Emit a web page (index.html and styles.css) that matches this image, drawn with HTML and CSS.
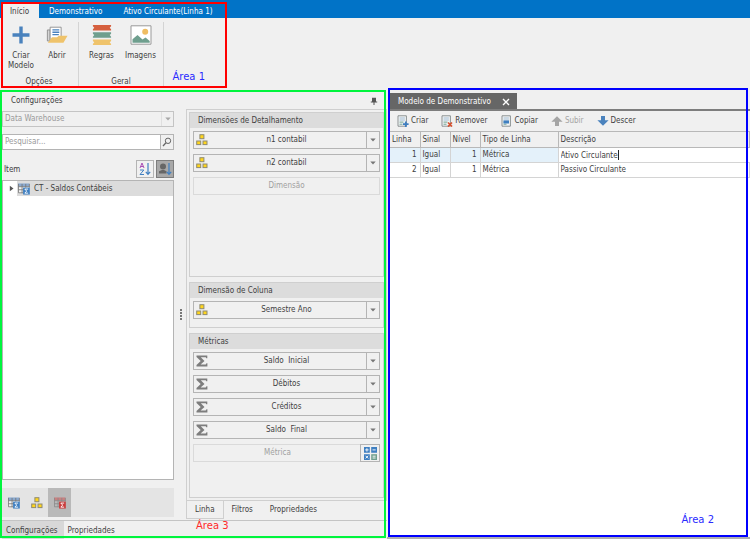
FILE: index.html
```
<!DOCTYPE html>
<html lang="pt-BR">
<head>
  <meta charset="UTF-8" />
  <meta name="viewport" content="width=device-width, initial-scale=1.0"/>
  <title>Modelo de Demonstrativo</title>
  <link rel="stylesheet" href="styles.css">
</head>
<body>
  <!-- shared icons -->
  <svg class="sprite" aria-hidden="true">
    <symbol id="i-cubes" viewBox="0 0 12 12">
      <g fill="#ffd51c" stroke="#8e8a72" stroke-width="1">
        <rect x="3.9" y=".7" width="4" height="4"/>
        <rect x=".7" y="7" width="4" height="3.6"/>
        <rect x="7" y="7" width="4" height="3.6"/>
      </g>
    </symbol>
    <symbol id="i-sigma" viewBox="0 0 12 12">
      <path d="M.5.5h10.8v2.8h-1l-.6-1.1H4.8L8.500 6 4.600 9.600h5.100l.8-1.3h.9v3.200H.5v-1.600L4.700 6 .5 2z" fill="#7d7d7d"/>
    </symbol>
    <symbol id="i-table" viewBox="0 0 13 13">
      <path d="M.5 1h12v10H.5z" fill="#f3f3f3"/>
      <path d="M0 .5h12.5v3.3H0z" fill="#8aa9cf"/>
      <path d="M.5 1v9.6h5M.5 4h12M.5 7.3h6M4.4 1v10M8.4 1v4M12.3 1v4" fill="none" stroke="#777" stroke-width=".9"/>
      <path d="M5.5 5h7.3v7.5H5.5z" fill="#3f7fc1"/>
      <path d="M11 6.6H7.4L9.4 8.8 7.4 11H11" fill="none" stroke="#fff" stroke-width="1"/>
    </symbol>
    <symbol id="i-table-red" viewBox="0 0 13 13">
      <path d="M0 .5h12.5v3.3H0z" fill="#c98080"/>
      <path d="M.5 1v9.6h5M.5 4h12M.5 7.3h6M4.4 1v10M8.4 1v4M12.3 1v4" fill="none" stroke="#888" stroke-width=".9"/>
      <path d="M5.5 5h7.3v7.5H5.5z" fill="#c93c3c"/>
      <path d="M11 6.6H7.4L9.4 8.8 7.4 11H11" fill="none" stroke="#fff" stroke-width="1"/>
    </symbol>
    <symbol id="i-sheet" viewBox="0 0 12 12">
      <path d="M1 .8h8.4v10.4H1z" fill="#f4f6f6" stroke="#7f8788" stroke-width=".9"/>
      <path d="M2.5 3h5.4M2.5 5h5.4" stroke="#9fbad2" stroke-width="1"/>
      <path d="M2.5 7.1h4M2.5 9.2h3" stroke="#6fa293" stroke-width="1"/>
    </symbol>
    <symbol id="i-down" viewBox="0 0 6 4"><path d="M.3.4h5.4L3 3.6z" fill="#777"/></symbol>
    <symbol id="i-arrow" viewBox="0 0 12 12"><path d="M4 1h4v4.2h3.6L6 10.8.4 5.2H4z"/></symbol>
  </svg>

  <header class="ribbon">
    <nav class="ribbon-tabs">
      <button class="ribbon-tab active">Início</button>
      <button class="ribbon-tab">Demonstrativo</button>
      <button class="ribbon-tab">Ativo Circulante(Linha 1)</button>
    </nav>
    <div class="ribbon-body">
      <section class="group">
        <div class="group-items">
          <button class="tool">
            <svg viewBox="0 0 20 20"><path d="M8.3 1.5h3.4v6.8h6.8v3.4h-6.8v6.8H8.3v-6.8H1.5V8.3h6.8z" fill="#4a82bd"/></svg>
            <span>Criar<br>Modelo</span>
          </button>
          <button class="tool">
            <svg class="wide" viewBox="0 0 24 20">
              <path d="M1.5 4.5h3v12h-3z" fill="#d6d6d6" stroke="#8d8d8d"/>
              <path d="M4.500 1.500h12v14h-12z" fill="#fff" stroke="#8d8d8d"/>
              <path d="M7 4.5h7.500M7 7h7.500M7 9.500h7" stroke="#4a82bd" stroke-width="1.4"/>
              <path d="M2 18.500l4.500-6H12l2-1.800h9.500L19 18.500z" fill="#efc36b"/>
            </svg>
            <span>Abrir</span>
          </button>
        </div>
        <h2>Opções</h2>
      </section>
      <section class="group">
        <div class="group-items">
          <button class="tool">
            <svg class="wide" viewBox="0 0 22 22">
              <path d="M1 0h20v1.500L19.500 3 21 4.800V6H1V4.800L2.500 3 1 1.500z" fill="#d6603f"/>
              <path d="M1 8h20v1.500L19.500 11l1.500 1.800V14H1v-1.200L2.500 11 1 9.500z" fill="#6f9f8e"/>
              <path d="M1 16h20v1.500L19.500 19l1.500 1.800V22H1v-1.200L2.500 19 1 17.500z" fill="#efc36b"/>
            </svg>
            <span>Regras</span>
          </button>
          <button class="tool">
            <svg class="wide" viewBox="0 0 22 20">
              <path d="M1 .8h20v18.400H1z" fill="#fff" stroke="#999"/>
              <circle cx="15.200" cy="6.800" r="3" fill="#efbd62"/>
              <path d="M2.500 17.800v-3.500L7.500 10l5 4.500 3-2 4.200 3.500v1.800z" fill="#6f9f8e"/>
            </svg>
            <span>Imagens</span>
          </button>
        </div>
        <h2>Geral</h2>
      </section>
    </div>
    <div class="mark mark-red"><span>Área 1</span></div>
  </header>

  <main class="workspace">
    <section class="config">
      <div class="config-title">
        <h2>Configurações</h2>
        <button class="pin" aria-label="Fixar painel">
          <svg viewBox="0 0 8 8"><path d="M2 .8h4v3.700h1.200v1H4.500V8h-1V5.500H.8v-1H2z" fill="#555"/></svg>
        </button>
      </div>

      <div class="config-body">
        <div class="source">
          <div class="combo">
            <select aria-label="Fonte de dados" disabled>
              <option>Data Warehouse</option>
            </select>
            <span class="combo-arrow"><svg class="caret"><use href="#i-down"/></svg></span>
          </div>
          <div class="search">
            <input type="text" placeholder="Pesquisar..." aria-label="Pesquisar">
            <button aria-label="Buscar">
              <svg viewBox="0 0 10 10"><circle cx="6" cy="3.800" r="2.700" fill="none" stroke="#666"/><path d="M4 5.800L1 9" stroke="#666" stroke-width="1.300"/></svg>
            </button>
          </div>
          <div class="item-row">
            <h3>Item</h3>
            <button class="sort" aria-label="Ordenar de A a Z">
              <svg viewBox="0 0 14 14">
                <path d="M2 6L4 1l2 5M2.600 4.500h2.800" fill="none" stroke="#a94fb5"/>
                <path d="M2 8h3.800L2 12.500h4" fill="none" stroke="#3f7fc1"/>
                <path d="M10 1v11M7.800 9.800L10 12.300l2.200-2.500" fill="none" stroke="#3f7fc1" stroke-width="1.200"/>
              </svg>
            </button>
            <button class="sort pressed" aria-label="Ordenar por usuário">
              <svg viewBox="0 0 14 14">
                <circle cx="5" cy="4.500" r="3" fill="#666"/><path d="M1 11.500V9.200L4 8h2l2.500 1.200v2.300z" fill="#666"/>
                <path d="M11 1v11M8.800 9.800L11 12.300l2.200-2.500" fill="none" stroke="#3f7fc1" stroke-width="1.200"/>
              </svg>
            </button>
          </div>
          <ul class="tree">
            <li>
              <svg class="expand" viewBox="0 0 5 7"><path d="M.8.8L4.500 3.500.8 6.200z" fill="#555"/></svg>
              <span class="node"><svg><use href="#i-table"/></svg>CT - Saldos Contábeis</span>
            </li>
          </ul>
          <div class="filters">
            <button aria-label="Tabelas"><svg><use href="#i-table"/></svg></button>
            <button aria-label="Dimensões"><svg><use href="#i-cubes"/></svg></button>
            <button class="pressed" aria-label="Métricas"><svg><use href="#i-table-red"/></svg></button>
          </div>
        </div>

        <div class="splitter"><i></i><i></i><i></i><i></i></div>

        <div class="fields">
          <div class="fields-page">
            <section class="card grow">
              <h3>Dimensões de Detalhamento</h3>
              <div class="card-list">
                <div class="split"><button class="field"><svg><use href="#i-cubes"/></svg>n1 contabil</button><button class="more" aria-label="Opções de n1 contabil"><svg class="caret"><use href="#i-down"/></svg></button></div>
                <div class="split"><button class="field"><svg><use href="#i-cubes"/></svg>n2 contabil</button><button class="more" aria-label="Opções de n2 contabil"><svg class="caret"><use href="#i-down"/></svg></button></div>
                <div class="split empty"><button class="field" disabled>Dimensão</button></div>
              </div>
            </section>
            <section class="card">
              <h3>Dimensão de Coluna</h3>
              <div class="card-list">
                <div class="split"><button class="field"><svg><use href="#i-cubes"/></svg>Semestre Ano</button><button class="more" aria-label="Opções de Semestre Ano"><svg class="caret"><use href="#i-down"/></svg></button></div>
              </div>
            </section>
            <section class="card grow">
              <h3>Métricas</h3>
              <div class="card-list">
                <div class="split"><button class="field"><svg><use href="#i-sigma"/></svg>Saldo&nbsp; Inicial</button><button class="more" aria-label="Opções de Saldo Inicial"><svg class="caret"><use href="#i-down"/></svg></button></div>
                <div class="split"><button class="field"><svg><use href="#i-sigma"/></svg>Débitos</button><button class="more" aria-label="Opções de Débitos"><svg class="caret"><use href="#i-down"/></svg></button></div>
                <div class="split"><button class="field"><svg><use href="#i-sigma"/></svg>Créditos</button><button class="more" aria-label="Opções de Créditos"><svg class="caret"><use href="#i-down"/></svg></button></div>
                <div class="split"><button class="field"><svg><use href="#i-sigma"/></svg>Saldo&nbsp; Final</button><button class="more" aria-label="Opções de Saldo Final"><svg class="caret"><use href="#i-down"/></svg></button></div>
                <div class="split empty">
                  <button class="field" disabled>Métrica</button>
                  <button class="calc" aria-label="Métrica calculada">
                    <svg viewBox="0 0 13 13">
                      <path d="M0 0h5.800v5.800H0zM7.200 0H13v5.800H7.200zM0 7.200h5.800V13H0z" fill="#3f7fc1"/>
                      <path d="M7.200 7.200H13V13H7.200z" fill="#6f9f8e"/>
                      <path d="M1.200 2.900h3.400M2.900 1.200v3.400M8.500 2.900h3.200M1.600 8.800l2.600 2.600M4.200 8.800l-2.600 2.600M8.600 9.200h3M8.600 11h3" stroke="#fff" stroke-width=".9"/>
                    </svg>
                  </button>
                </div>
              </div>
            </section>
          </div>
          <nav class="field-tabs">
            <button class="active">Linha</button>
            <button>Filtros</button>
            <button>Propriedades</button>
          </nav>
        </div>
      </div>

      <nav class="config-tabs">
        <button class="active">Configurações</button>
        <button>Propriedades</button>
      </nav>
      <div class="mark mark-green"><span>Área 3</span></div>
    </section>

    <section class="model">
      <div class="doc-tabs">
        <div class="doc-tab">
          <span>Modelo de Demonstrativo</span>
          <button aria-label="Fechar"><svg viewBox="0 0 8 8"><path d="M1 1l6 6M7 1L1 7" stroke="#fff" stroke-width="1.400"/></svg></button>
        </div>
      </div>
      <div class="toolbar">
        <button><svg viewBox="0 0 12 12"><use href="#i-sheet"/><path d="M8.800 6.500v5.500M6 9.200h5.600" stroke="#3f7fc1" stroke-width="1.800"/></svg>Criar</button>
        <button><svg viewBox="0 0 12 12"><use href="#i-sheet"/><path d="M7 7.500l4 4M11 7.500l-4 4" stroke="#d6502f" stroke-width="1.700"/></svg>Remover</button>
        <button><svg viewBox="0 0 12 12"><use href="#i-sheet"/><path d="M2.500 5.500h5.500v3H2.500z" fill="#3f7fc1"/></svg>Copiar</button>
        <button disabled><svg class="up" fill="#a5a5a5"><use href="#i-arrow"/></svg>Subir</button>
        <button><svg fill="#4a82bd"><use href="#i-arrow"/></svg>Descer</button>
      </div>
      <div class="grid-wrap">
        <table class="grid">
          <colgroup>
            <col class="c-num"><col class="c-num"><col class="c-num"><col class="c-type"><col>
          </colgroup>
          <thead>
            <tr><th>Linha</th><th>Sinal</th><th>Nível</th><th>Tipo de Linha</th><th>Descrição</th></tr>
          </thead>
          <tbody>
            <tr class="selected">
              <td class="num">1</td><td>Igual</td><td class="num">1</td><td>Métrica</td>
              <td class="editing"><input type="text" value="Ativo Circulante" aria-label="Descrição"><span class="cursor"></span></td>
            </tr>
            <tr>
              <td class="num">2</td><td>Igual</td><td class="num">1</td><td>Métrica</td><td>Passivo Circulante</td>
            </tr>
          </tbody>
        </table>
      </div>
      <div class="mark mark-blue"><span>Área 2</span></div>
    </section>
  </main>
</body>
</html>
```
FILE: styles.css
```
* {
  box-sizing: border-box;
}

body {
  margin: 0;
  min-height: 100vh;
  display: flex;
  flex-direction: column;
  background: #f0f0f0;
  color: #404040;
  font-family: 'DejaVu Sans Condensed', 'DejaVu Sans', sans-serif;
  font-size: 8px;
  line-height: 10px;
}

button, input, select {
  font: inherit;
  color: inherit;
  margin: 0;
  padding: 0;
  border: 0;
  border-radius: 0;
  background: none;
}

h2, h3 {
  margin: 0;
  font-size: 8px;
  font-weight: 400;
}

svg {
  display: block;
  flex: none;
  width: 12px;
  height: 12px;
}

.sprite {
  position: absolute;
  width: 0;
  height: 0;
}

.caret {
  width: 6px;
  height: 4px;
}

/* ribbon */
.ribbon {
  position: relative;
  height: 88px;
}

.ribbon-tabs {
  display: flex;
  height: 18px;
  padding: 4px 0 0 2px;
  background: #0173c7;
}

.ribbon-tab {
  padding: 1px 10px 0;
  color: #fff;
}

.ribbon-tab + .ribbon-tab + .ribbon-tab {
  padding-left: 11px;
}

.ribbon-tab.active {
  padding: 1px 10px 0 8px;
  background: #f0f0f0;
  color: #404040;
}

.ribbon-body {
  display: flex;
  padding-top: 4px;
}

.group {
  display: flex;
  flex-direction: column;
  justify-content: space-between;
  height: 64px;
  border-right: 1px solid #d4d4d4;
  padding-left: 3px;
  padding-right: 3px;
  text-align: center;
}

.group h2 {
  line-height: 8px;
}

.group-items {
  display: flex;
}

.tool {
  display: flex;
  flex-direction: column;
  align-items: center;
  gap: 6px;
  width: 36px;
  padding-top: 3px;
}

.group + .group .tool {
  width: 39px;
}

.tool svg {
  width: 20px;
  height: 20px;
}

.tool .wide {
  width: 22px;
}

/* panels */
.workspace {
  flex: 1;
  display: flex;
}

.config {
  position: relative;
  flex: 0 0 387px;
  display: flex;
  flex-direction: column;
  padding-left: 2px;
}

.config-title {
  display: flex;
  justify-content: space-between;
  align-items: center;
  height: 21px;
  padding: 4px 9px 0;
}

.pin svg {
  width: 8px;
  height: 8px;
}

.config-body {
  flex: 1;
  display: flex;
}

.source {
  width: 172px;
  display: flex;
  flex-direction: column;
  padding-top: 2px;
}

.combo {
  position: relative;
}

.combo select {
  display: block;
  width: 100%;
  height: 16px;
  padding: 0 2px;
  border: 1px solid #c4c4c4;
  appearance: none;
  color: #9a9a9a;
  opacity: 1;
}

.combo-arrow {
  position: absolute;
  top: 1px;
  right: 1px;
  bottom: 1px;
  width: 12px;
  display: grid;
  place-items: center;
  border-left: 1px solid #d4d4d4;
  opacity: 0.6;
}

.search {
  display: flex;
  height: 16px;
  margin-top: 7px;
  border: 1px solid #b4b4b4;
}

.search input {
  flex: 1;
  min-width: 0;
  padding: 0 2px;
  background: #fff;
}

.search input::placeholder {
  color: #9a9a9a;
}

.search button {
  width: 13px;
  display: grid;
  place-items: center;
  border-left: 1px solid #b4b4b4;
}

.search svg {
  width: 10px;
  height: 10px;
}

.item-row {
  display: flex;
  align-items: center;
  gap: 2px;
  margin-top: 10px;
  padding-left: 2px;
}

.item-row h3 {
  flex: 1;
  padding-top: 2px;
}

.sort {
  width: 18px;
  height: 18px;
  display: grid;
  place-items: center;
  border: 1px solid #b4b4b4;
}

.sort svg {
  width: 14px;
  height: 14px;
}

.sort.pressed {
  background: #a8a8a8;
  border-color: #7d7d7d;
}

.tree {
  flex: 1;
  margin: 2px 0 0;
  padding: 0;
  border: 1px solid #b4b4b4;
  background: #fff;
  list-style: none;
}

.tree li {
  display: flex;
  align-items: center;
  gap: 3px;
  padding-left: 6px;
}

.expand {
  width: 5px;
  height: 7px;
}

.node {
  flex: 1;
  display: flex;
  align-items: center;
  gap: 4px;
  height: 15px;
  padding-left: 1px;
  background: #dcdcdc;
}

.filters {
  display: flex;
  height: 29px;
  margin: 8px 0 2px;
  background: #e4e4e4;
}

.filters button {
  width: 23px;
  display: grid;
  place-items: center;
}

.filters .pressed {
  background: #b9b9b9;
}

.splitter {
  width: 12px;
  padding-left: 2px;
  display: flex;
  flex-direction: column;
  align-items: center;
  justify-content: center;
  gap: 1px;
}

.splitter i {
  width: 2px;
  height: 2px;
  background: #777;
}

.fields {
  flex: 1;
  display: flex;
  flex-direction: column;
}

.fields-page {
  flex: 1;
  display: flex;
  flex-direction: column;
  gap: 5px;
  padding: 2px;
  border: 1px solid #cfcfcf;
}

.card {
  border: 1px solid #cfcfcf;
  padding-bottom: 5px;
}

.card.grow {
  flex: 1;
}

.card h3 {
  padding: 3px 8px 2px;
  background: #dcdcdc;
}

.card-list {
  display: flex;
  flex-direction: column;
  gap: 5px;
  padding: 3px;
}

.split {
  display: flex;
  height: 18px;
  border: 1px solid #b4b4b4;
}

.field {
  position: relative;
  flex: 1;
  padding-left: 13px;
}

.field svg {
  position: absolute;
  left: 2px;
  top: 2px;
}

.more {
  width: 13px;
  display: grid;
  place-items: center;
  border-left: 1px solid #b4b4b4;
}

.empty {
  border-color: #dadada;
  color: #a0a0a0;
}

.empty .field {
  padding-left: 0;
}

.calc {
  width: 20px;
  margin: -1px;
  display: grid;
  place-items: center;
  border: 1px solid #b4b4b4;
}

.calc svg {
  width: 13px;
  height: 13px;
}

.field-tabs {
  display: flex;
  height: 18px;
}

.field-tabs button {
  padding: 0 9px 0 8px;
}

.field-tabs .active {
  border: 1px solid #cfcfcf;
  border-top: 0;
  padding-right: 8px;
}

.config-tabs {
  display: flex;
  height: 19px;
  margin-top: 1px;
  border-top: 1px solid #c4c4c4;
}

.config-tabs button {
  padding: 1px 4px 0;
}

.config-tabs .active {
  padding-right: 6px;
  background: #d8d8d8;
}

/* statement model */
.model {
  position: relative;
  flex: 1;
  min-width: 0;
  display: flex;
  flex-direction: column;
  padding-left: 3px;
  border-bottom: 2px solid #b0b0b0;
}

.doc-tabs {
  padding-top: 5px;
  border-bottom: 2px solid #7d7d7d;
}

.doc-tab {
  width: 127px;
  height: 16px;
  display: flex;
  align-items: center;
  justify-content: space-between;
  padding: 1px 7px 0 8px;
  background: #666;
  color: #fff;
}

.doc-tab svg {
  width: 8px;
  height: 8px;
}

.toolbar {
  display: flex;
  gap: 13px;
  height: 20px;
  padding-left: 7px;
}

.toolbar button {
  display: flex;
  align-items: center;
  gap: 2px;
}

.toolbar button:disabled {
  color: #a5a5a5;
}

.up {
  transform: rotate(180deg);
}

.grid-wrap {
  flex: 1;
  background: #fff;
}

.grid {
  width: 100%;
  table-layout: fixed;
  border-collapse: collapse;
}

.c-num {
  width: 30px;
}

.c-type {
  width: 78px;
}

.grid th, .grid td {
  height: 15px;
  padding: 0 3px 0 2px;
  border: 1px solid #d4d4d4;
  border-left: 0;
  text-align: left;
  font-weight: 400;
}

.grid th {
  height: 16px;
  background: #f0f0f0;
  border-color: #b8b8b8;
}

.grid .num {
  text-align: right;
}

.grid .selected {
  background: #e4f1fa;
}

.grid .editing {
  background: #fff;
  border: 1px dashed #777;
  border-right: 0;
}

.editing input {
  display: inline-block;
  vertical-align: middle;
  field-sizing: content;
  height: 12px;
  outline: 0;
}

/* caret at the end of the edited text */
.cursor {
  display: inline-block;
  vertical-align: middle;
  width: 1px;
  height: 10px;
  background: #222;
}

/* area outlines */
.mark {
  position: absolute;
  pointer-events: none;
  font-family: 'DejaVu Sans', sans-serif;
  font-size: 10px;
  line-height: 12px;
}

.mark span {
  position: absolute;
}

.mark-red {
  left: 1px;
  top: 2px;
  bottom: 0;
  width: 226px;
  border: 2px solid #f00;
  color: #2a2aff;
}

.mark-red span {
  right: 20px;
  bottom: 3px;
}

.mark-green {
  inset: 2px 1px 1px 0;
  border: 2px solid #00f53d;
  color: #ff2a2a;
}

.mark-green span {
  left: 194px;
  bottom: 4px;
}

.mark-blue {
  inset: 0 2px 0 1px;
  border: 2px solid #00f;
  color: #2a2aff;
}

.mark-blue span {
  right: 32px;
  bottom: 9px;
}
```
